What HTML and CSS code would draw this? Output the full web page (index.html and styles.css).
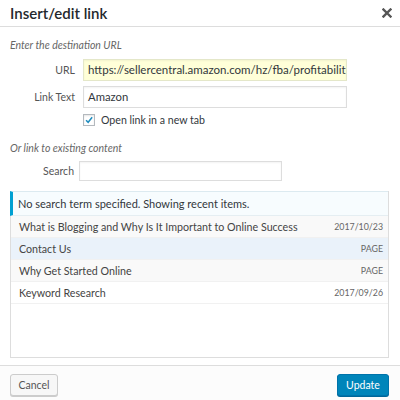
FILE: index.html
```html
<!DOCTYPE html>
<html>
<head>
<meta charset="utf-8">
<link rel="stylesheet" href="styles.css">
</head>
<body>
<div class="dialog">
  <div class="header">
    <div class="title">Insert/edit link</div>
    <svg class="close" width="10" height="10" viewBox="0 0 10 10"><path d="M1.5 1.5 L8.5 8.5 M8.5 1.5 L1.5 8.5" stroke="#555" stroke-width="2.4" stroke-linecap="square"/></svg>
  </div>
  <div class="body">
    <div class="hint first">Enter the destination URL</div>
    <div class="field url-row">
      <label class="lbl">URL</label>
      <div class="input yellow">https://sellercentral.amazon.com/hz/fba/profitabilit</div>
    </div>
    <div class="field text-row">
      <label class="lbl">Link Text</label>
      <div class="input">Amazon</div>
    </div>
    <div class="check-row">
      <span class="checkbox"><svg width="12" height="12" viewBox="0 0 12 12"><path d="M2.5 6.2 L5 8.8 L9.8 2.8" fill="none" stroke="#1e8cbe" stroke-width="1.8"/></svg></span>
      <span class="check-label">Open link in a new tab</span>
    </div>
    <div class="hint second">Or link to existing content</div>
    <div class="field search-row">
      <label class="lbl search-lbl">Search</label>
      <div class="input search"></div>
    </div>
    <div class="results">
      <div class="notice">No search term specified. Showing recent items.</div>
      <ul class="list">
        <li class="alt"><span>What is Blogging and Why Is It Important to Online Success</span><span class="meta">2017/10/23</span></li>
        <li class="hover"><span>Contact Us</span><span class="meta">PAGE</span></li>
        <li class="alt"><span>Why Get Started Online</span><span class="meta">PAGE</span></li>
        <li><span>Keyword Research</span><span class="meta">2017/09/26</span></li>
      </ul>
    </div>
  </div>
  <div class="footer">
    <div class="btn cancel">Cancel</div>
    <div class="btn update">Update</div>
  </div>
</div>
</body>
</html>
```
FILE: styles.css
```css
html, body {
  margin: 0;
  padding: 0;
  background: #fff;
}
.dialog {
  width: 400px;
  height: 400px;
  display: flex;
  flex-direction: column;
  font-family: Lato, "Open Sans", sans-serif;
  font-size: 11px;
  color: #3c4044;
  background: #fff;
  overflow: hidden;
}
.header {
  height: 27px;
  border-bottom: 1px solid #dddddd;
  display: flex;
  align-items: center;
  justify-content: space-between;
  padding: 0 8px 0 10px;
  box-sizing: border-box;
  flex: none;
}
.title {
  font-size: 15px;
  font-weight: 600;
  color: #23282d;
  margin-top: -1px;
}
.close {
  display: block;
  margin-top: -1px;
}
.body {
  padding: 0 11px 0 10px;
  flex: 1;
  display: flex;
  flex-direction: column;
}
.hint {
  font-style: italic;
  color: #666;
  font-size: 10.5px;
  line-height: 14px;
}
.hint.first { margin-top: 11px; }
.hint.second { margin-top: 15px; }
.field {
  display: flex;
  align-items: center;
}
.lbl {
  width: 65px;
  text-align: right;
  color: #555;
  padding-right: 8px;
  flex: none;
  font-size: 10.5px;
}
.search-lbl {
  width: 64px;
  padding-right: 5px;
}
.input {
  width: 264px;
  height: 22px;
  box-sizing: border-box;
  border: 1px solid #dddddd;
  box-shadow: inset 0 1px 2px rgba(0,0,0,0.05);
  background: #fff;
  padding: 0 4px;
  line-height: 20px;
  white-space: nowrap;
  overflow: hidden;
  color: #32373c;
  font-size: 11.3px;
}
.yellow {
  background: #ffffd8;
  border-color: #e4e7c9;
  font-size: 11.5px;
}
.url-row { margin-top: 7px; }
.text-row { margin-top: 5px; }
.search {
  width: 203px;
  height: 20px;
}
.check-row {
  display: flex;
  align-items: center;
  margin-top: 5px;
  margin-left: 73px;
  height: 13px;
}
.checkbox {
  width: 12px;
  height: 12px;
  box-sizing: border-box;
  border: 1px solid #b4b9be;
  background: #fff;
  display: flex;
  align-items: center;
  justify-content: center;
  box-shadow: inset 0 1px 2px rgba(0,0,0,0.1);
}
.checkbox svg { display: block; }
.check-label {
  margin-left: 6px;
  color: #32373c;
  font-size: 10.6px;
}
.search-row { margin-top: 6px; }
.results {
  margin-top: 10px;
  height: 167px;
  flex: none;
  border: 1px solid #dddddd;
  box-sizing: border-box;
  display: flex;
  flex-direction: column;
}
.notice {
  height: 25px;
  box-sizing: border-box;
  border-left: 3px solid #00a0d2;
  background: #f7fcfe;
  border-bottom: 1px solid #e5eef2;
  border-top: 1px solid #dceaf0;
  padding-left: 5px;
  padding-top: 2px;
  line-height: 20px;
  color: #32373c;
  margin: -1px 0 0 -1px;
}
.list {
  list-style: none;
  margin: 0;
  padding: 0;
}
.list li {
  height: 22px;
  box-sizing: border-box;
  border-bottom: 1px solid #f1f1f1;
  display: flex;
  justify-content: space-between;
  align-items: center;
  padding: 0 5px 0 8px;
  color: #444;
  font-size: 10.7px;
  white-space: nowrap;
}
.list li.alt { background: #f9f9f9; }
.list li.hover { background: #eaf2fa; }
.meta {
  font-size: 8.8px;
  color: #666;
}
.footer {
  height: 35px;
  flex: none;
  border-top: 1px solid #dddddd;
  background: #fcfcfc;
  display: flex;
  align-items: center;
  justify-content: space-between;
  padding: 0 11px 0 10px;
  box-sizing: border-box;
}
.btn {
  height: 22px;
  box-sizing: border-box;
  line-height: 20px;
  border-radius: 3px;
  font-size: 10.5px;
  margin-top: 4px;
  text-align: center;
  padding: 0;
}
.cancel {
  border: 1px solid #cccccc;
  background: #f7f7f7;
  color: #555;
  box-shadow: 0 1px 0 #cccccc;
  width: 48px;
}
.update {
  border: 1px solid #0073aa;
  background: #0085ba;
  color: #fff;
  box-shadow: 0 1px 0 #006799;
  width: 52px;
}
```
